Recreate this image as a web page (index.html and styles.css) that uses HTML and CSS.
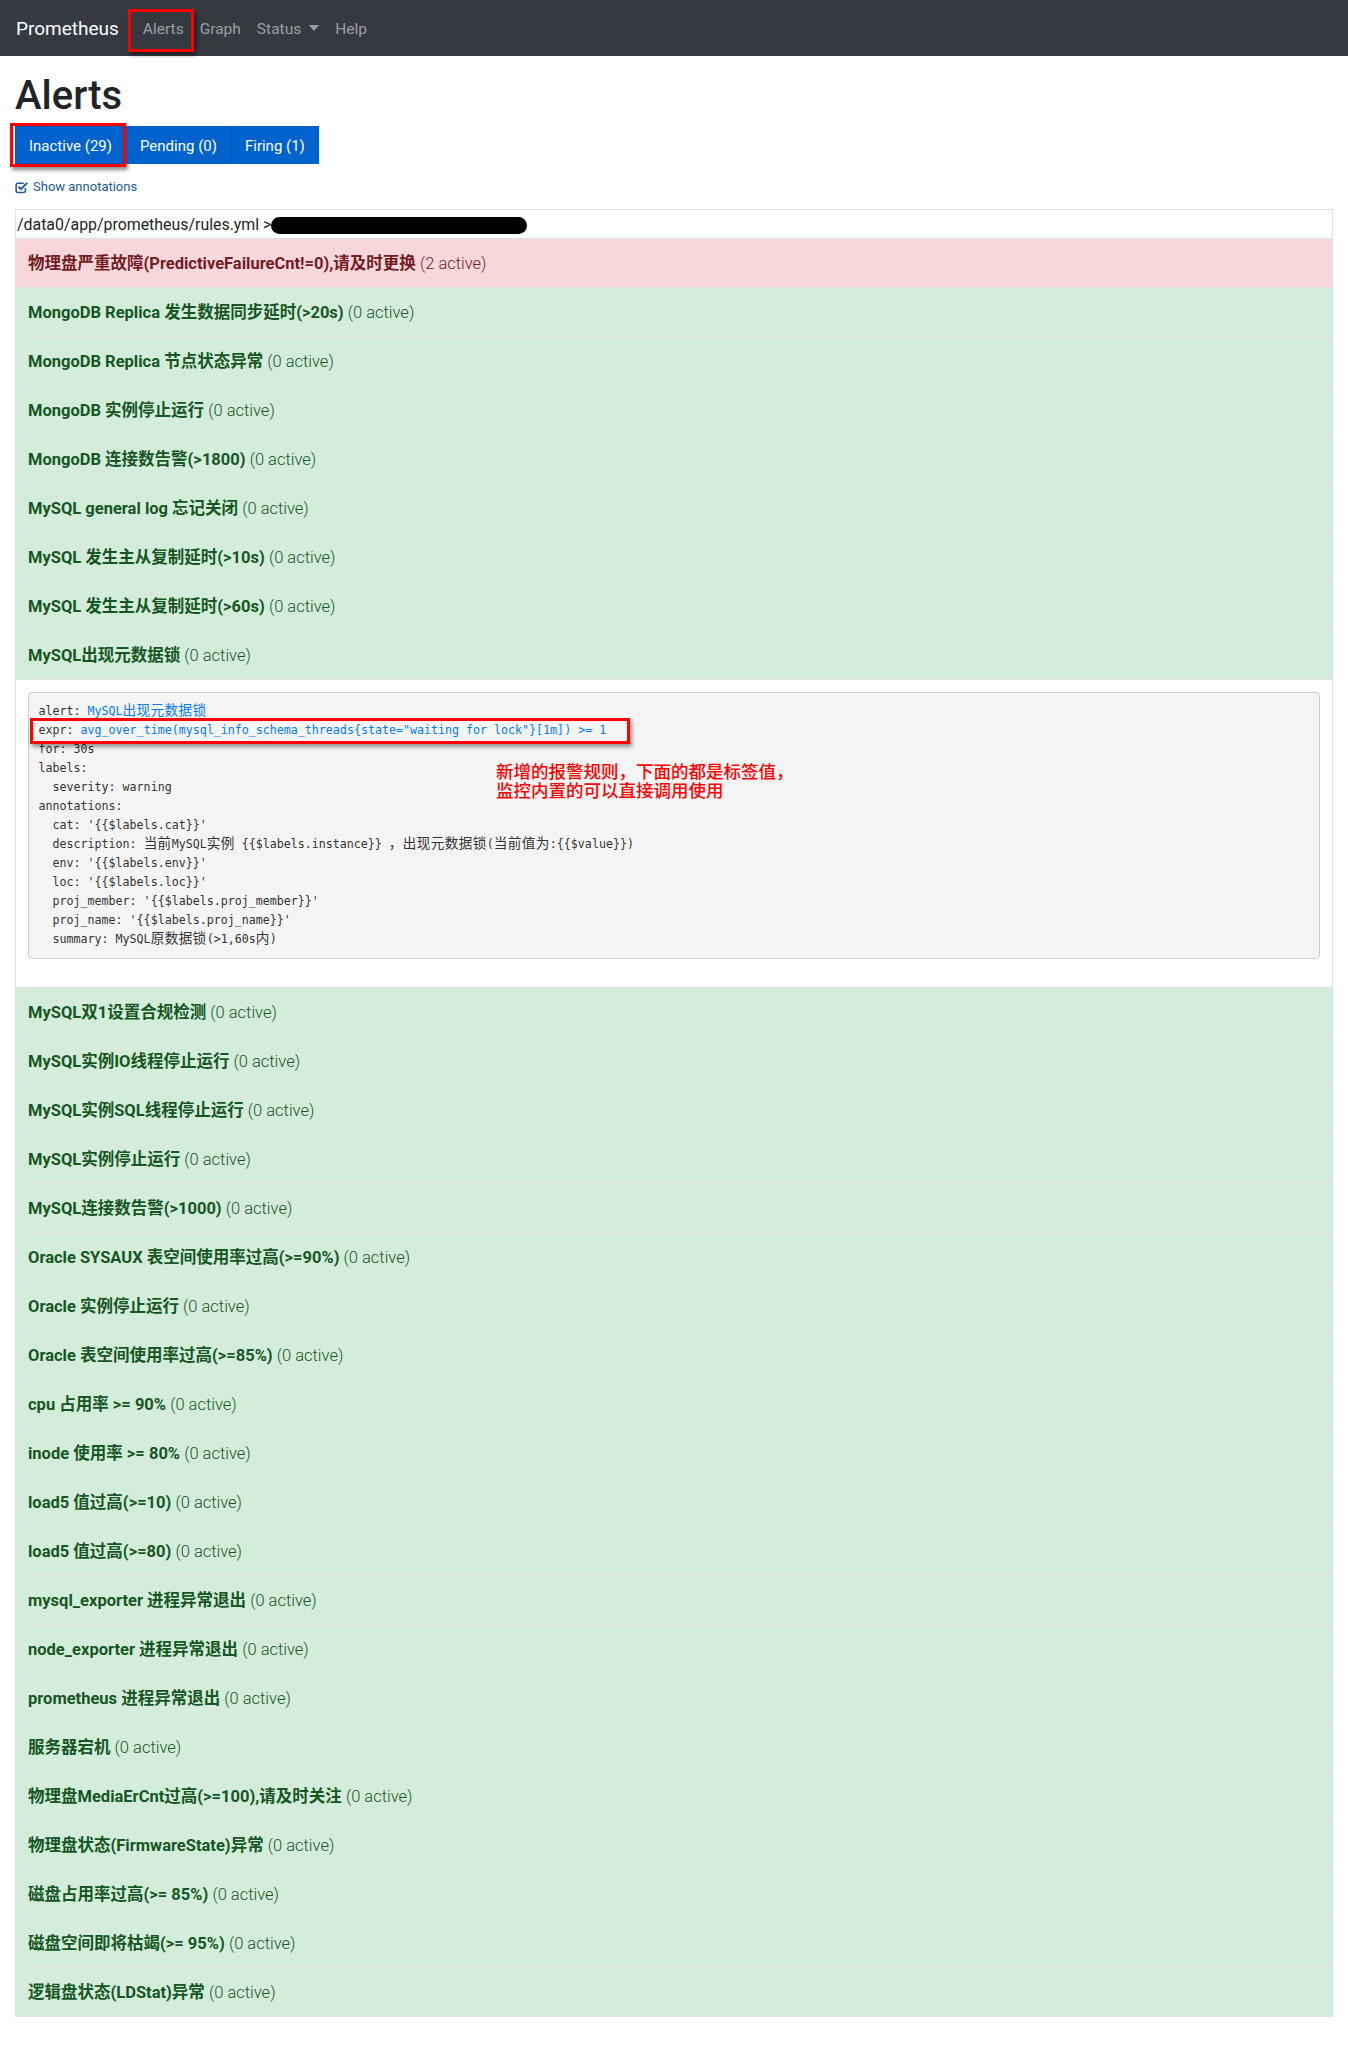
FILE: index.html
```html
<!DOCTYPE html>
<html lang="zh-CN">
<head>
<meta charset="utf-8">
<title>Prometheus Time Series Collection and Processing Server</title>
<link rel="stylesheet" href="styles.css">
</head>
<body>
<nav class="navbar">
  <a class="brand" href="#">Prometheus</a>
  <ul class="nav">
    <li><a class="nav-link marked" href="#">Alerts</a></li>
    <li><a class="nav-link" href="#">Graph</a></li>
    <li><a class="nav-link" href="#">Status<span class="caret"></span></a></li>
    <li><a class="nav-link" href="#">Help</a></li>
  </ul>
</nav>
<main class="container">
  <h1 class="title">Alerts</h1>
  <div class="btn-group">
    <button class="btn marked-btn">Inactive (29)</button>
    <button class="btn">Pending (0)</button>
    <button class="btn">Firing (1)</button>
  </div>
  <label class="annot-toggle">
    <svg class="check-icon" viewBox="0 0 14 14" width="13" height="13" aria-hidden="true">
      <path d="M11.2 7.6V10.6a1.8 1.8 0 0 1-1.8 1.8H3a1.8 1.8 0 0 1-1.8-1.8V4.2A1.8 1.8 0 0 1 3 2.4h6.4" fill="none" stroke="currentColor" stroke-width="1.7"/>
      <path d="M3.8 6.2l2.6 2.6L13.2 2" fill="none" stroke="currentColor" stroke-width="2.2"/>
    </svg>
    Show annotations
  </label>
  <table class="rules">
    <tbody>
      <tr class="file-row"><td>/data0/app/prometheus/rules.yml &gt;<span class="redact"></span></td></tr>
      <tr class="danger"><td><strong>物理盘严重故障(PredictiveFailureCnt!=0),请及时更换</strong> <span class="count">(2 active)</span></td></tr>
      <tr class="success"><td><strong>MongoDB Replica 发生数据同步延时(&gt;20s)</strong> <span class="count">(0 active)</span></td></tr>
      <tr class="success"><td><strong>MongoDB Replica 节点状态异常</strong> <span class="count">(0 active)</span></td></tr>
      <tr class="success"><td><strong>MongoDB 实例停止运行</strong> <span class="count">(0 active)</span></td></tr>
      <tr class="success"><td><strong>MongoDB 连接数告警(&gt;1800)</strong> <span class="count">(0 active)</span></td></tr>
      <tr class="success"><td><strong>MySQL general log 忘记关闭</strong> <span class="count">(0 active)</span></td></tr>
      <tr class="success"><td><strong>MySQL 发生主从复制延时(&gt;10s)</strong> <span class="count">(0 active)</span></td></tr>
      <tr class="success"><td><strong>MySQL 发生主从复制延时(&gt;60s)</strong> <span class="count">(0 active)</span></td></tr>
      <tr class="success"><td><strong>MySQL出现元数据锁</strong> <span class="count">(0 active)</span></td></tr>
      <tr class="detail-row"><td><pre class="rule-def">alert: <span class="val">MySQL</span><span class="val zh">出现元数据锁</span>
expr: <span class="val">avg_over_time(mysql_info_schema_threads{state="waiting for lock"}[1m]) &gt;= 1</span>
for: 30s
labels:
  severity: warning
annotations:
  cat: '{{$labels.cat}}'
  description: <span class="zh">当前</span>MySQL<span class="zh">实例</span> {{$labels.instance}} <span class="zh">，出现元数据锁</span>(<span class="zh">当前值为</span>:{{$value}})
  env: '{{$labels.env}}'
  loc: '{{$labels.loc}}'
  proj_member: '{{$labels.proj_member}}'
  proj_name: '{{$labels.proj_name}}'
  summary: MySQL<span class="zh">原数据锁</span>(&gt;1,60s<span class="zh">内</span>)<span class="expr-mark"></span><span class="note">新增的报警规则，下面的都是标签值，<br>监控内置的可以直接调用使用</span></pre></td></tr>
      <tr class="success"><td><strong>MySQL双1设置合规检测</strong> <span class="count">(0 active)</span></td></tr>
      <tr class="success"><td><strong>MySQL实例IO线程停止运行</strong> <span class="count">(0 active)</span></td></tr>
      <tr class="success"><td><strong>MySQL实例SQL线程停止运行</strong> <span class="count">(0 active)</span></td></tr>
      <tr class="success"><td><strong>MySQL实例停止运行</strong> <span class="count">(0 active)</span></td></tr>
      <tr class="success"><td><strong>MySQL连接数告警(&gt;1000)</strong> <span class="count">(0 active)</span></td></tr>
      <tr class="success"><td><strong>Oracle SYSAUX 表空间使用率过高(&gt;=90%)</strong> <span class="count">(0 active)</span></td></tr>
      <tr class="success"><td><strong>Oracle 实例停止运行</strong> <span class="count">(0 active)</span></td></tr>
      <tr class="success"><td><strong>Oracle 表空间使用率过高(&gt;=85%)</strong> <span class="count">(0 active)</span></td></tr>
      <tr class="success"><td><strong>cpu 占用率 &gt;= 90%</strong> <span class="count">(0 active)</span></td></tr>
      <tr class="success"><td><strong>inode 使用率 &gt;= 80%</strong> <span class="count">(0 active)</span></td></tr>
      <tr class="success"><td><strong>load5 值过高(&gt;=10)</strong> <span class="count">(0 active)</span></td></tr>
      <tr class="success"><td><strong>load5 值过高(&gt;=80)</strong> <span class="count">(0 active)</span></td></tr>
      <tr class="success"><td><strong>mysql_exporter 进程异常退出</strong> <span class="count">(0 active)</span></td></tr>
      <tr class="success"><td><strong>node_exporter 进程异常退出</strong> <span class="count">(0 active)</span></td></tr>
      <tr class="success"><td><strong>prometheus 进程异常退出</strong> <span class="count">(0 active)</span></td></tr>
      <tr class="success"><td><strong>服务器宕机</strong> <span class="count">(0 active)</span></td></tr>
      <tr class="success"><td><strong>物理盘MediaErCnt过高(&gt;=100),请及时关注</strong> <span class="count">(0 active)</span></td></tr>
      <tr class="success"><td><strong>物理盘状态(FirmwareState)异常</strong> <span class="count">(0 active)</span></td></tr>
      <tr class="success"><td><strong>磁盘占用率过高(&gt;= 85%)</strong> <span class="count">(0 active)</span></td></tr>
      <tr class="success"><td><strong>磁盘空间即将枯竭(&gt;= 95%)</strong> <span class="count">(0 active)</span></td></tr>
      <tr class="success"><td><strong>逻辑盘状态(LDStat)异常</strong> <span class="count">(0 active)</span></td></tr>
    </tbody>
  </table>
</main>
</body>
</html>
```
FILE: styles.css
```css
* { box-sizing: border-box; }
html, body { margin: 0; }
body {
  font-family: Roboto, "Noto Sans CJK SC", sans-serif;
  font-size: 16px;
  line-height: 1.5;
  color: #212529;
  background: #fff;
}
a { text-decoration: none; }

/* navbar */
.navbar {
  display: flex;
  align-items: center;
  height: 56px;
  padding: 0 16px;
  background: #343a40;
}
.brand {
  color: #fff;
  font-size: 19px;
  line-height: 30px;
  padding-top: 2px;
  margin-right: 16px;
}
.nav {
  display: flex;
  list-style: none;
  margin: 0;
  padding: 0;
}
.nav-link {
  position: relative;
  display: block;
  padding: 9px 8px 7px;
  color: rgba(255, 255, 255, 0.52);
  font-size: 15.5px;
  line-height: 24px;
}
.caret {
  display: inline-block;
  margin-left: 8px;
  vertical-align: 3px;
  border-top: 6px solid;
  border-left: 5.5px solid transparent;
  border-right: 5.5px solid transparent;
}
.marked::after {
  content: "";
  position: absolute;
  left: -7px;
  right: -2px;
  top: 1px;
  bottom: -4px;
  border: 3px solid #f00;
  box-shadow: 2px 3px 4px rgba(0, 0, 0, 0.45);
}

/* page */
.container { padding: 0 15px; }
.title {
  margin: 16px 0 6px;
  font-size: 40px;
  font-weight: 500;
  line-height: 48px;
}
.btn-group { display: flex; }
.btn {
  position: relative;
  font-family: inherit;
  font-size: 15px;
  line-height: 24px;
  padding: 7px 13px 5px;
  color: #fff;
  background: #0062cc;
  border: 1px solid #005cbf;
  cursor: pointer;
}
.btn + .btn { border-left-color: #0057b5; }
.marked-btn::after {
  content: "";
  position: absolute;
  left: -6px;
  right: -1px;
  top: -4px;
  bottom: -4px;
  border: 3px solid #f00;
  box-shadow: 2px 3px 4px rgba(0, 0, 0, 0.45);
}
.annot-toggle {
  display: flex;
  align-items: center;
  gap: 5px;
  margin-top: 13px;
  font-size: 13px;
  line-height: 20px;
  color: #235a96;
}
.check-icon { display: block; }

/* rules table */
.rules {
  width: 100%;
  margin-top: 12px;
  border: 1px solid #dee2e6;
  border-collapse: separate;
  border-spacing: 0;
}
.rules td {
  padding: 13px 12px 11px;
  border-top: 1px solid #dee2e6;
  font-size: 16.5px;
  line-height: 24px;
  vertical-align: middle;
}
.rules .file-row td {
  padding: 3px 1px 1px;
  border-top: 0;
  font-size: 15.9px;
  background: #fff;
}
.redact {
  display: inline-block;
  width: 256px;
  height: 17px;
  margin-left: 0;
  vertical-align: -4px;
  background: #000;
  border-radius: 9px;
}
.danger { background: #f8d7da; color: #721c24; }
.success { background: #d4edda; color: #155724; }
.rules strong { font-weight: 700; }
.count { font-weight: 300; }

.rules .detail-row td { padding: 12px; background: #fff; }
.rule-def {
  position: relative;
  margin: 0 0 16px;
  padding: 9px 9.5px;
  font-family: "DejaVu Sans Mono", monospace;
  font-size: 11.65px;
  line-height: 19px;
  color: #333;
  background: #f5f5f5;
  border: 1px solid #ccc;
  border-radius: 4px;
  overflow: visible;
}
.zh {
  font-family: "Noto Sans CJK SC", sans-serif;
  font-size: 13.6px;
  letter-spacing: 0.4px;
  line-height: 1;
}
.val { color: #007bff; }
.expr-mark {
  position: absolute;
  left: 1px;
  top: 25px;
  width: 600px;
  height: 26px;
  border: 3px solid #f00;
  box-shadow: 2px 3px 4px rgba(0, 0, 0, 0.4);
}
.note {
  position: absolute;
  left: 467px;
  top: 69px;
  font-family: "Noto Sans CJK SC", sans-serif;
  font-size: 17.5px;
  font-weight: 500;
  line-height: 18.5px;
  color: #f00;
}
```
